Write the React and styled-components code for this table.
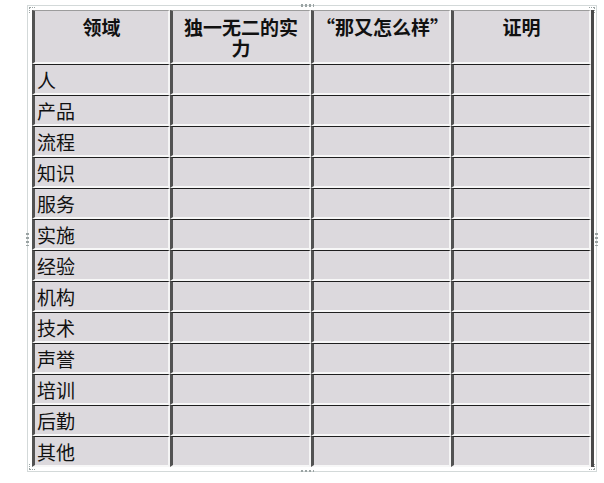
import React from "react";
import styled, { createGlobalStyle, css } from "styled-components";

const GlobalStyle = createGlobalStyle`
  body {
    margin: 0;
    background: #ffffff;
    font-family: "Noto Sans CJK SC", "Noto Sans", sans-serif;
  }
`;

const Frame = styled.div`
  position: relative;
  width: 562px;
  margin: 5px 0 0 27px;
  padding: 4px 2px 4px 4px;
  border: 1px solid #d3d9d9;
`;

const Grid = styled.div`
  display: grid;
  grid-template-columns: 138px 141px 140px 140px;
  grid-template-rows: 54px;
  grid-auto-rows: 31px;
  border-right: 3px solid #4a4a4a;
`;

const Cell = styled.div`
  box-sizing: border-box;
  background: #dcd9dd;
  border-left: 3px solid #525252;
  border-right: 2px solid #f5f5f5;
  border-bottom: 2px solid #f7f7f7;
  border-top: 1px solid ${(p) => (p.$head ? "#9c9c9c" : "#1e1e1e")};
  color: #111;
  font-size: 19px;
  overflow: hidden;
`;

const HeadCell = styled(Cell)`
  font-weight: 700;
  text-align: center;
  line-height: 21px;
  padding: 5px 2px 0;
`;

const BodyCell = styled(Cell)`
  line-height: 29px;
  padding-left: 2px;
  white-space: nowrap;
`;

/* editor resize handles that sit over the frame edge */
const handleSpots = {
  top: css`top: -2px; left: 272px;`,
  bottom: css`bottom: -2px; left: 272px;`,
  left: css`left: -2px; top: 226px;`,
  right: css`right: -2px; top: 226px;`,
};

const Handle = styled.span`
  position: absolute;
  display: block;
  background-image: radial-gradient(circle, #9aa3a3 45%, transparent 55%);
  ${(p) =>
    p.$side === "left" || p.$side === "right"
      ? css`width: 3px; height: 14px; background-size: 3px 4px;`
      : css`width: 14px; height: 3px; background-size: 4px 3px;`}
  ${(p) => handleSpots[p.$side]}
`;

const cornerSpots = {
  tl: css`top: 1px; left: 1px;`,
  tr: css`top: 1px; right: 1px; transform: scaleX(-1);`,
  bl: css`bottom: 1px; left: 1px; transform: scaleY(-1);`,
  br: css`bottom: 1px; right: 1px; transform: scale(-1);`,
};

const Corner = styled.span`
  position: absolute;
  width: 5px;
  height: 5px;
  border-top: 1px dotted #9aa3a3;
  border-left: 1px dotted #9aa3a3;
  ${(p) => cornerSpots[p.$at]}
`;

const headers = ["领域", "独一无二的实力", "“那又怎么样”", "证明"];
const rows = [
  "人",
  "产品",
  "流程",
  "知识",
  "服务",
  "实施",
  "经验",
  "机构",
  "技术",
  "声誉",
  "培训",
  "后勤",
  "其他",
];

export default function App() {
  return (
    <>
      <GlobalStyle />
      <Frame>
        <Grid>
          {headers.map((h) => (
            <HeadCell key={h} $head>
              {h}
            </HeadCell>
          ))}
          {rows.map((r) => (
            <React.Fragment key={r}>
              <BodyCell>{r}</BodyCell>
              <BodyCell />
              <BodyCell />
              <BodyCell />
            </React.Fragment>
          ))}
        </Grid>
        {["top", "bottom", "left", "right"].map((s) => (
          <Handle key={s} $side={s} />
        ))}
        {["tl", "tr", "bl", "br"].map((c) => (
          <Corner key={c} $at={c} />
        ))}
      </Frame>
    </>
  );
}
